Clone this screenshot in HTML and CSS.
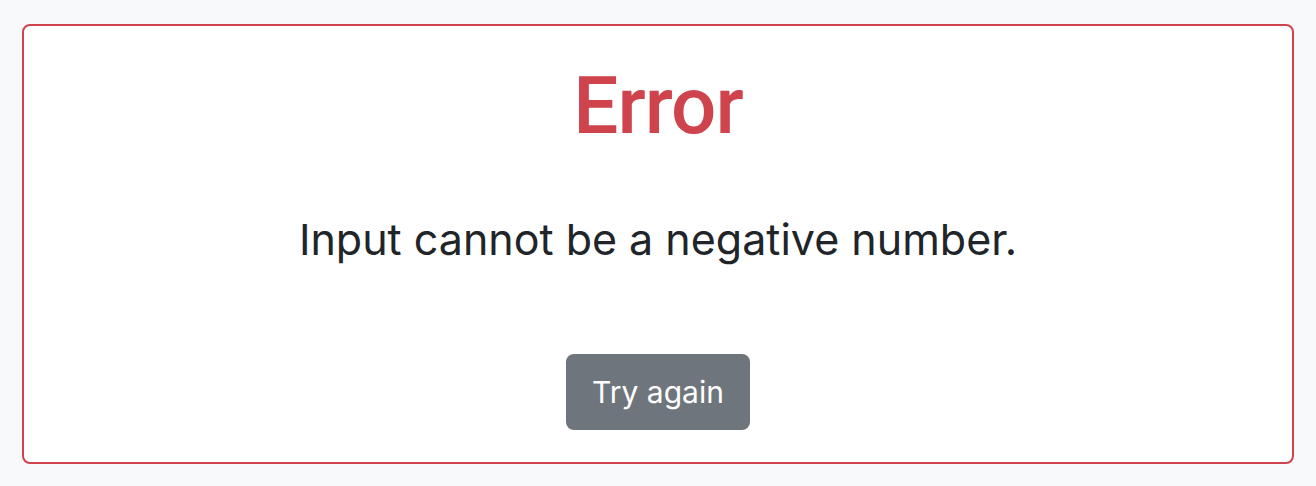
FILE: index.html
```html
<!DOCTYPE html>
<html lang="en">
<head>
    <meta charset="UTF-8">
    <meta name="viewport" content="width=device-width, initial-scale=1.0">
    <title>Error</title>
    <link rel="stylesheet" href="styles.css">
</head>
<body>
    <div class="error-card">
        <h1 class="error-title">Error</h1>
        <p class="error-message">Input cannot be a negative number.</p>
        <a href="/" class="btn btn-secondary">Try again</a>
    </div>
</body>
</html>
```

FILE: styles.css
```css
body {
    font-family: Inter, "Noto Sans", Arial, sans-serif;
    margin: 0;
    padding: 24px 22px;
    background-color: #f8f9fa;
    color: #212529;
}

.error-card {
    background-color: #ffffff;
    border: 2px solid #cf444c;
    border-radius: 8px;
    padding: 32px 20px 32px;
    display: flex;
    flex-direction: column;
    align-items: center;
    text-align: center;
}

.error-title {
    color: #cf444c;
    font-family: Roboto, Inter, Arial, sans-serif;
    font-size: 80px;
    font-weight: 500;
    line-height: 96px;
    letter-spacing: -1px;
    margin: 0 0 53px;
}

.error-message {
    font-size: 43px;
    line-height: 64px;
    margin: 0 0 83px;
}

.btn {
    display: inline-block;
    font-size: 30px;
    line-height: 44px;
    padding: 16px 26px;
    border-radius: 8px;
    color: #ffffff;
    text-decoration: none;
}

.btn-secondary {
    background-color: #6f757c;
}
```
